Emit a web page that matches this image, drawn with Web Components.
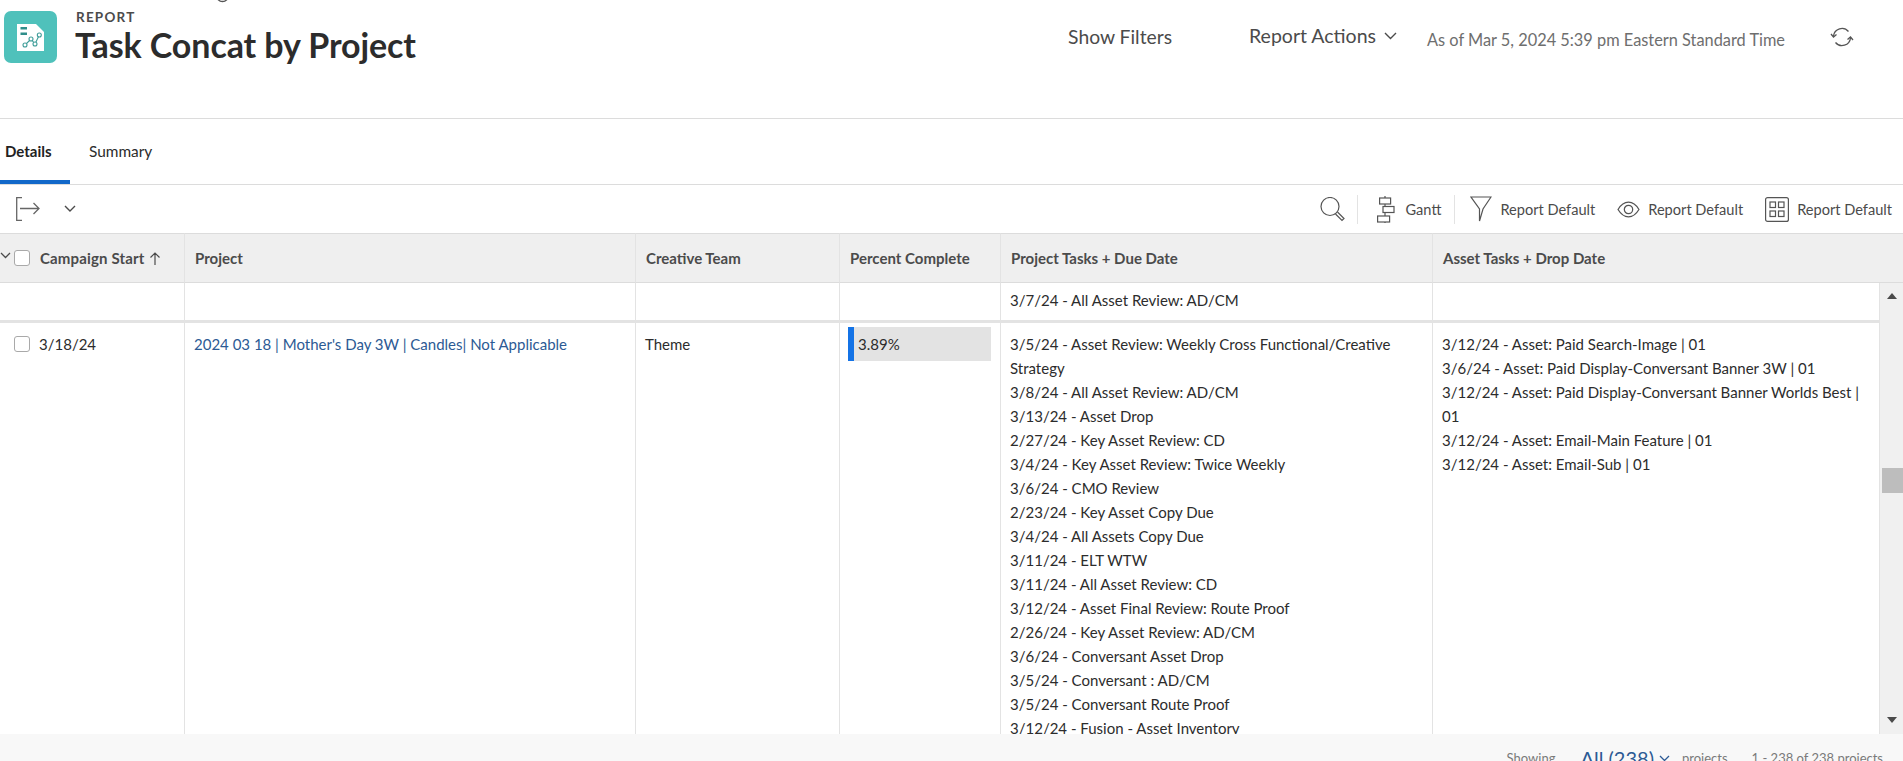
<!DOCTYPE html>
<html><head><meta charset="utf-8">
<style>
html,body{margin:0;padding:0;background:#fff}
body{width:1903px;height:761px;overflow:hidden;font-family:"Lato","Open Sans",sans-serif;color:#2c2c2c;position:relative}
</style></head><body>
<template id="t-header"><style>
:host{display:flex;height:119px;box-sizing:border-box;border-bottom:1px solid #dcdcdc;align-items:flex-start;position:relative}
.logo{width:53px;height:52px;margin:11px 0 0 4px;border-radius:7px;background:#4fc1bb;display:flex;align-items:center;justify-content:center;flex:none}
.titles{margin:9px 0 0 18px;flex:none}
.k{font-size:13.500px;font-weight:700;letter-spacing:1.200px;color:#4b4b4b;line-height:16px;margin-left:1px}
h1{margin:0;font-size:34px;font-weight:700;line-height:40px;color:#2c2c2c;letter-spacing:-.09px;white-space:nowrap}
.spacer{flex:1}
.a{font-size:19.300px;color:#4b4b4b;white-space:nowrap;margin-top:26px;line-height:22px}
.f{margin-right:77px}
.r{display:flex;align-items:center;gap:8px;margin-right:30px;margin-top:25px;font-size:19.500px}
.s{font-size:16.350px;color:#6e6e6e;margin-top:30px;line-height:20px;white-space:nowrap;margin-right:45px}
.sync{margin:25px 49px 0 0;flex:none}
.arc{position:absolute;left:215px;top:-7px}
</style>
<svg class="arc" width="15" height="11" viewBox="0 0 15 11"><circle cx="7.500" cy="2.500" r="6" fill="none" stroke="#555" stroke-width="1.300"/></svg>
<div class="logo"><svg width="27" height="27" viewBox="0 0 27 27"><path d="M0 0H19L27 8V27H0Z" fill="#fff"/><path d="M3.500 4.200h6.500M3.500 9.700h6.500" stroke="#2f8e8a" stroke-width="2.500"/><path d="M8 21l6-6 4 5 4.300-9" fill="none" stroke="#3f9d99" stroke-width="1.100"/><g fill="#fff" stroke="#3f9d99" stroke-width="1.100"><circle cx="8" cy="21" r="2"/><circle cx="14" cy="15" r="2"/><circle cx="18" cy="20" r="2"/><circle cx="22.300" cy="11" r="2"/></g></svg></div>
<div class="titles"><div class="k">REPORT</div><h1>Task Concat by Project</h1></div>
<div class="spacer"></div>
<div class="a f">Show Filters</div>
<div class="a r"><span>Report Actions</span><svg width="13" height="8" viewBox="0 0 13 8"><path d="M1 1l5.500 5.500L12 1" fill="none" stroke="#4b4b4b" stroke-width="1.400"/></svg></div>
<div class="s">As of Mar 5, 2024 5:39 pm Eastern Standard Time</div>
<svg class="sync" width="24" height="24" viewBox="0 0 24 24" fill="none" stroke="#555" stroke-width="1.300"><path d="M3.500 11a8.500 8.500 0 0 1 15-4.500"/><path d="M20.500 13a8.500 8.500 0 0 1-15 4.500"/><path d="M1 9l2.500 3L6.500 9.500M23 15l-2.500-3-3 2.500"/></svg>
</template>

<template id="t-tabs"><style>
:host{display:flex;height:66px;box-sizing:border-box;border-bottom:1px solid #dcdcdc;font-size:15px}
.t{display:flex;align-items:center;height:65px;box-sizing:border-box;padding:2px 0 3px;color:#2c2c2c}
.on{font-weight:700;width:70px;padding-left:5px;border-bottom:4px solid #1268c9;color:#222;padding-bottom:0}
.off{margin-left:19px;font-size:15.400px}
</style><div class="t on">Details</div><div class="t off">Summary</div></template>

<template id="t-tool"><style>
:host{display:flex;align-items:center;height:48px;box-sizing:border-box;font-size:14.600px;color:#4b4b4b;white-space:nowrap}
.l{display:flex;align-items:center;margin-left:15px;gap:24px}
.sp{flex:1}
.i{display:flex;align-items:center;gap:9px}
.sep{width:1px;height:29px;background:#e3e3e3}
</style>
<div class="l"><svg width="25" height="24" viewBox="0 0 25 24" fill="none" stroke="#666" stroke-width="1.300"><path d="M7 .7H1.700V23.300H7"/><path d="M5 11.500H24M18.500 6l5.500 5.500L18.500 17"/></svg><svg width="12" height="8" viewBox="0 0 12 8"><path d="M1 1l5 5 5-5" fill="none" stroke="#4b4b4b" stroke-width="1.400"/></svg></div>
<div class="sp"></div>
<div class="i" style="margin-right:12px"><svg width="25" height="25" viewBox="0 0 25 25" fill="none" stroke="#555" stroke-width="1.200"><circle cx="10" cy="9.500" r="9"/><path d="M15.500 17l6.500 6.500 2-2-6.500-6.500"/></svg></div>
<div class="sep"></div>
<div class="i" style="margin:0 13px 0 19px;gap:10px"><svg width="18" height="27" viewBox="0 0 18 27" fill="none" stroke="#555" stroke-width="1.200"><path d="M8 0v2M8 8v2.500M8 16.500V20M8 26v1"/><rect x="2.600" y="2" width="11" height="6"/><rect x="6" y="10.500" width="11" height="6"/><rect x=".6" y="20" width="12" height="6"/></svg><span>Gantt</span></div>
<div class="sep"></div>
<div class="i" style="margin:0 22px 0 15px;gap:8px"><svg width="22" height="26" viewBox="0 0 22 26" fill="none" stroke="#555" stroke-width="1.200"><path d="M1 1H21L13 13 9.500 25V13Z"/></svg><span>Report Default</span></div>
<div class="i" style="margin-right:22px;gap:8px"><svg width="23" height="17" viewBox="0 0 22 16" fill="none" stroke="#555" stroke-width="1.200"><path d="M1 8C4 3 7 1 11 1s7 2 10 7c-3 5-6 7-10 7S4 13 1 8Z"/><circle cx="11" cy="8" r="4"/></svg><span>Report Default</span></div>
<div class="i" style="margin-right:11px;gap:8px"><svg width="24" height="25" viewBox="0 0 24 25" fill="none" stroke="#555" stroke-width="1.200"><rect x=".6" y=".6" width="22.800" height="23.800" rx="2"/><rect x="5" y="5" width="5.500" height="5.500"/><rect x="13.500" y="5" width="5.500" height="5.500"/><rect x="5" y="14" width="5.500" height="5.500"/><rect x="13.500" y="14" width="5.500" height="5.500"/></svg><span>Report Default</span></div>
</template>

<template id="t-check"><style>
:host{display:inline-block;width:14px;height:14px;border:1px solid #a9a9a9;border-radius:3px;background:#fff;flex:none}
</style></template>

<template id="t-bar"><style>
:host{display:block;height:34px;background:#e3e3e3;position:relative;font-size:15px;line-height:34px;padding-left:10px;box-sizing:border-box}
i{position:absolute;left:0;top:0;bottom:0;width:6px;background:#1473e6}
</style><i></i><slot></slot></template>

<template id="t-table"><style>
:host{display:block;height:501px;overflow:hidden;position:relative;font-size:15px;line-height:24px;color:#2c2c2c}
.grid{display:grid;grid-template-columns:185px 451px 204px 161px 432px 447px 23px;}
.h{height:50px;box-sizing:border-box;background:#efefef;border-top:1px solid #dcdcdc;border-bottom:1px solid #dcdcdc;border-right:1px solid #e3e3e3;font-weight:700;font-size:15px;color:#4b4b4b;display:flex;align-items:center;padding-left:10px;white-space:nowrap}
.h.first{padding-left:0}
.h.end{border-right:0}
.c{box-sizing:border-box;border-right:1px solid #e3e3e3;padding:0 9px}
.r1{height:40px;border-bottom:3px solid #e3e3e3;padding-top:5px}
.r2{height:411px;padding-top:9px;overflow:hidden}
.cb{display:flex;gap:9px;padding-left:14px;align-items:center;height:24px}
a{color:#2c5a94;text-decoration:none}
.scroll{grid-column:7;grid-row:2/span 2;background:#f0f0f0;position:relative}
.scroll b{position:absolute}
.up{left:7px;top:10px;width:0;height:0;border:5.500px solid transparent;border-top:0;border-bottom:6px solid #4a4a4a}
.dn{left:7px;bottom:11px;width:0;height:0;border:5.500px solid transparent;border-bottom:0;border-top:6px solid #4a4a4a}
.th{left:2px;right:0;top:185px;height:25px;background:#bdbdbd}
.h svg{flex:none}
</style>
<div class="grid">
<div class="h first"><svg width="11" height="7" viewBox="0 0 11 7" style="margin:-5px 3px 0 0"><path d="M1 1l4.500 4.500L10 1" fill="none" stroke="#4b4b4b" stroke-width="1.300"/></svg><x-check></x-check><span style="margin-left:10px;letter-spacing:.15px">Campaign Start</span><svg width="12" height="13" viewBox="0 0 12 13" style="margin-left:5px"><path d="M6 13V1M1.500 5.500L6 1l4.500 4.500" fill="none" stroke="#4b4b4b" stroke-width="1.200"/></svg></div>
<div class="h">Project</div><div class="h">Creative Team</div><div class="h">Percent Complete</div><div class="h">Project Tasks + Due Date</div><div class="h end" style="grid-column:6/span 2">Asset Tasks + Drop Date</div>
<div class="c r1"></div><div class="c r1"></div><div class="c r1"></div><div class="c r1"></div><div class="c r1">3/7/24 - All Asset Review: AD/CM</div><div class="c r1"></div>
<div class="scroll"><b class="up"></b><b class="th"></b><b class="dn"></b></div>
<div class="c r2" style="padding-left:0"><div class="cb"><x-check></x-check><span>3/18/24</span></div></div>
<div class="c r2"><a>2024 03 18 | Mother's Day 3W | Candles| Not Applicable</a></div>
<div class="c r2">Theme</div>
<div class="c r2" style="padding:4px 9px 0 8px"><x-bar>3.89%</x-bar></div>
<div class="c r2">3/5/24 - Asset Review: Weekly Cross Functional/Creative Strategy<br>3/8/24 - All Asset Review: AD/CM<br>3/13/24 - Asset Drop<br>2/27/24 - Key Asset Review: CD<br>3/4/24 - Key Asset Review: Twice Weekly<br>3/6/24 - CMO Review<br>2/23/24 - Key Asset Copy Due<br>3/4/24 - All Assets Copy Due<br>3/11/24 - ELT WTW<br>3/11/24 - All Asset Review: CD<br>3/12/24 - Asset Final Review: Route Proof<br>2/26/24 - Key Asset Review: AD/CM<br>3/6/24 - Conversant Asset Drop<br>3/5/24 - Conversant : AD/CM<br>3/5/24 - Conversant Route Proof<br>3/12/24 - Fusion - Asset Inventory</div>
<div class="c r2">3/12/24 - Asset: Paid Search-Image | 01<br>3/6/24 - Asset: Paid Display-Conversant Banner 3W | 01<br>3/12/24 - Asset: Paid Display-Conversant Banner Worlds Best | 01<br>3/12/24 - Asset: Email-Main Feature | 01<br>3/12/24 - Asset: Email-Sub | 01</div>
</div></template>

<template id="t-foot"><style>
:host{display:flex;height:27px;background:#f8f8f8;justify-content:flex-end;align-items:flex-start;font-size:13px;color:#7a7a7a;white-space:nowrap;overflow:hidden;padding-right:20px;box-sizing:border-box}
span{margin-top:15px;line-height:18px}
.all{font-size:20px;color:#2c5a94;margin:12px 5px 0 25px;line-height:24px}
svg{margin:21px 12px 0 0}
.n{margin-left:24px}
</style><span>Showing</span><span class="all">All (238)</span><svg width="11" height="7" viewBox="0 0 11 7"><path d="M1 1l4.500 4.500L10 1" fill="none" stroke="#2c5a94" stroke-width="1.300"/></svg><span>projects</span><span class="n">1 - 238 of 238 projects</span></template>

<report-header></report-header><report-tabs></report-tabs><report-tool></report-tool><report-table></report-table><report-foot></report-foot>
<script>
const map={'report-header':'t-header','report-tabs':'t-tabs','report-tool':'t-tool','report-table':'t-table','report-foot':'t-foot','x-check':'t-check','x-bar':'t-bar'};
for(const [n,id] of Object.entries(map)){
 customElements.define(n,class extends HTMLElement{constructor(){super();this.attachShadow({mode:'open'}).appendChild(document.getElementById(id).content.cloneNode(true));}});
}
</script>
</body></html>
